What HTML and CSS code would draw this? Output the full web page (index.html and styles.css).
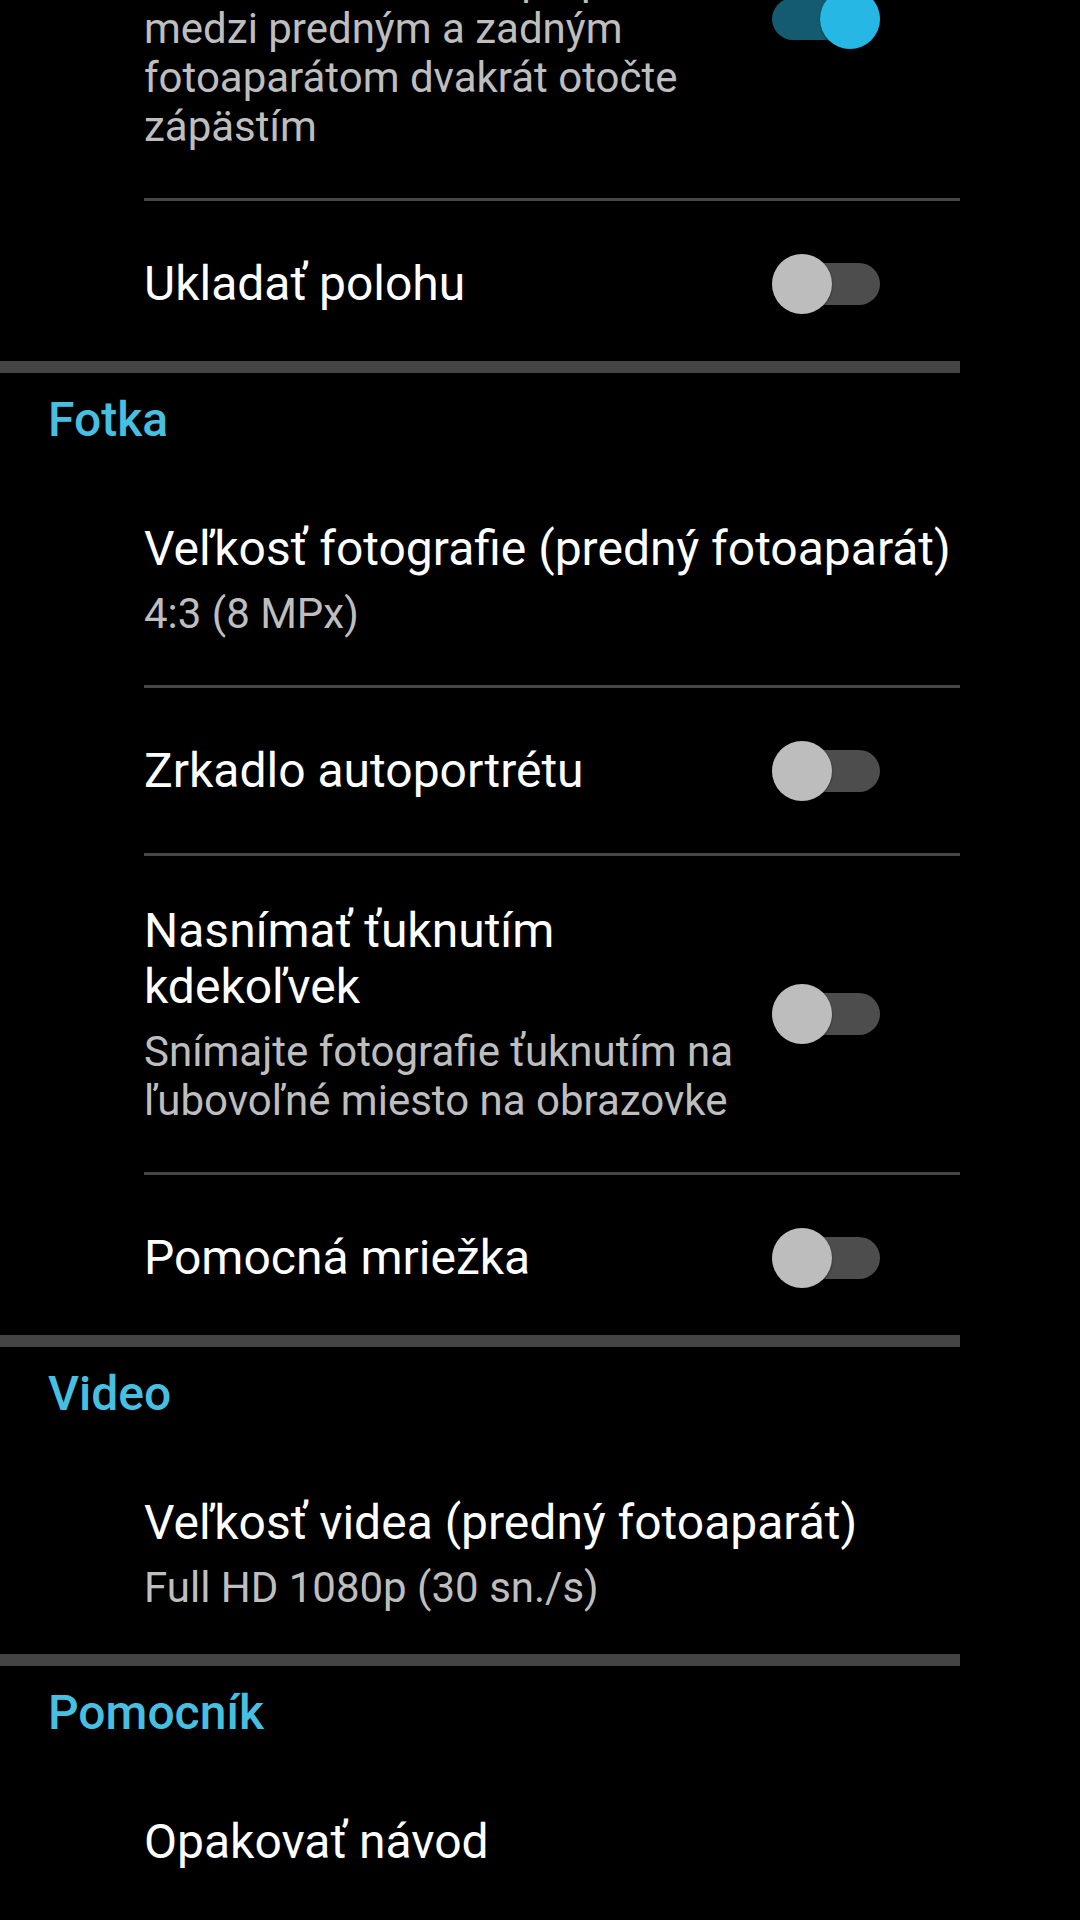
FILE: index.html
```html
<!DOCTYPE html>
<html lang="sk">
<head>
<meta charset="utf-8">
<title>Nastavenia fotoaparátu</title>
<link rel="stylesheet" href="styles.css">
</head>
<body>
<main class="settings">
  <section class="group">
    <div class="row row-toggle">
      <div class="text">
        <div class="title">Prepínanie otočením</div>
        <div class="summary">Ak chcete okamžite prepínať medzi predným a zadným fotoaparátom dvakrát otočte zápästím</div>
      </div>
      <span class="switch on"><span class="track"></span><span class="thumb"></span></span>
    </div>
    <div class="divider"></div>
    <div class="row row-toggle">
      <div class="text">
        <div class="title">Ukladať polohu</div>
      </div>
      <span class="switch"><span class="track"></span><span class="thumb"></span></span>
    </div>
  </section>
  <div class="separator"></div>

  <section class="group">
    <h2 class="category">Fotka</h2>
    <div class="row row-plain">
      <div class="text">
        <div class="title">Veľkosť fotografie (predný fotoaparát)</div>
        <div class="summary">4:3 (8 MPx)</div>
      </div>
    </div>
    <div class="divider"></div>
    <div class="row row-toggle">
      <div class="text">
        <div class="title">Zrkadlo autoportrétu</div>
      </div>
      <span class="switch"><span class="track"></span><span class="thumb"></span></span>
    </div>
    <div class="divider"></div>
    <div class="row row-toggle">
      <div class="text">
        <div class="title">Nasnímať ťuknutím kdekoľvek</div>
        <div class="summary">Snímajte fotografie ťuknutím na ľubovoľné miesto na obrazovke</div>
      </div>
      <span class="switch"><span class="track"></span><span class="thumb"></span></span>
    </div>
    <div class="divider"></div>
    <div class="row row-toggle">
      <div class="text">
        <div class="title">Pomocná mriežka</div>
      </div>
      <span class="switch"><span class="track"></span><span class="thumb"></span></span>
    </div>
  </section>
  <div class="separator"></div>

  <section class="group">
    <h2 class="category">Video</h2>
    <div class="row row-plain">
      <div class="text">
        <div class="title">Veľkosť videa (predný fotoaparát)</div>
        <div class="summary">Full HD 1080p (30 sn./s)</div>
      </div>
    </div>
  </section>
  <div class="separator"></div>

  <section class="group">
    <h2 class="category">Pomocník</h2>
    <div class="row row-plain">
      <div class="text">
        <div class="title">Opakovať návod</div>
      </div>
    </div>
  </section>
</main>
</body>
</html>
```

FILE: styles.css
```css
html, body {
  margin: 0;
  padding: 0;
  background: #000;
}

body {
  width: 1080px;
  height: 1920px;
  overflow: hidden;
  font-family: Roboto, "Noto Sans", "Liberation Sans", sans-serif;
  color: #fff;
}

.settings {
  width: 960px;
  margin-top: -160px;
}

.group {
  display: flex;
  flex-direction: column;
}

.category {
  margin: 0;
  padding: 19px 0 27px 48px;
  font-size: 48px;
  line-height: 55px;
  font-weight: 500;
  color: #47bfe1;
}

.row {
  box-sizing: border-box;
  display: flex;
  align-items: center;
  padding: 47px 80px 47px 144px;
}

.row-toggle {
  min-height: 165px;
}

.row-plain {
  padding-right: 0;
}

.text {
  flex: 1;
  min-width: 0;
  display: flex;
  flex-direction: column;
  gap: 12px;
}

.row-toggle .text {
  margin-right: 30px;
}

.title {
  font-size: 48px;
  line-height: 56px;
  color: #ffffff;
}

.summary {
  font-size: 42px;
  line-height: 49px;
  color: #bebebe;
}

.divider {
  height: 3px;
  margin-left: 144px;
  background: #464646;
}

.separator {
  height: 12px;
  margin-top: -5px;
  background: #444444;
}

.switch {
  flex: none;
  display: grid;
  width: 108px;
  height: 60px;
}

.track,
.thumb {
  grid-area: 1 / 1;
}

.track {
  align-self: center;
  height: 42px;
  border-radius: 21px;
  background: #4d4d4d;
}

.thumb {
  width: 60px;
  height: 60px;
  border-radius: 50%;
  background: #bdbdbd;
  justify-self: start;
  box-shadow: 0 1px 2px rgba(0, 0, 0, 0.5);
}

.switch.on .track {
  background: #155b70;
}

.switch.on .thumb {
  justify-self: end;
  background: #26b7e5;
}
```
